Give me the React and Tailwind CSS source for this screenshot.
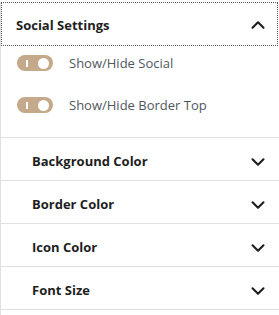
import { ChevronDown, ChevronUp } from "lucide-react";

const sections = ["Background Color", "Border Color", "Icon Color", "Font Size"];
const toggles = ["Show/Hide Social", "Show/Hide Border Top"];

function Toggle() {
  return (
    <span className="relative inline-flex h-[16px] w-[36px] shrink-0 items-center rounded-full bg-[#c4a98b]">
      <span className="absolute left-[9px] top-[4.5px] h-[7px] w-[2px] bg-white" />
      <span className="absolute right-[4px] top-[2.5px] h-[11px] w-[11px] rounded-full bg-white" />
    </span>
  );
}

export default function App() {
  return (
    <div className="min-h-[315px] w-[279px] border-l border-[#e0e0e0] bg-white font-['Open_Sans',sans-serif]">
      <button
        type="button"
        className="mt-[2px] flex h-[44px] w-[277px] items-center justify-between pt-[3px] pl-[15px] pr-[9px] outline outline-1 outline-dotted outline-[#555] -outline-offset-1"
      >
        <span className="text-[13px] font-bold text-[#1e1e1e]">Social Settings</span>
        <ChevronUp size={22} className="-mt-[2px] text-[#1e1e1e]" strokeWidth={2.3} />
      </button>
      <div className="flex flex-col gap-[22px] px-[16px] pt-[7px] pb-[22px]">
        {toggles.map((label) => (
          <label key={label} className="flex h-[20px] items-center gap-[16px]">
            <Toggle />
            <span className="text-[13px] leading-[20px] text-[#50575e]">{label}</span>
          </label>
        ))}
      </div>
      {sections.map((label) => (
        <div
          key={label}
          className="flex h-[43px] items-center justify-between border-t border-[#e0e0e0] pt-[6px] pl-[31px] pr-[10px]"
        >
          <span className="text-[13px] font-bold text-[#1e1e1e]">{label}</span>
          <ChevronDown size={22} className="text-[#1e1e1e]" strokeWidth={2.3} />
        </div>
      ))}
      <div className="border-t border-[#e0e0e0]" />
    </div>
  );
}
